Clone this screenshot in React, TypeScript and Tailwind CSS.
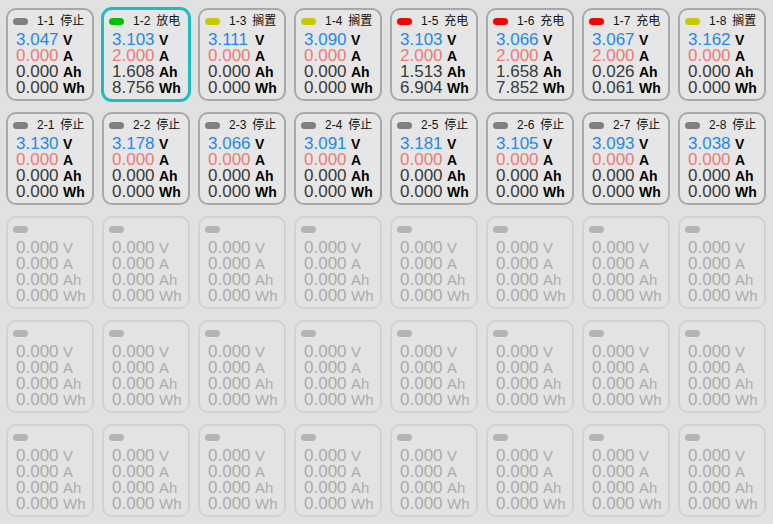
type Ch = {
  id: string;
  state?: string;
  led: string;
  v: string;
  a: string;
  ah: string;
  wh: string;
  selected?: boolean;
};

const row1: Ch[] = [
  { id: "1-1", state: "停止", led: "bg-[#808080]", v: "3.047", a: "0.000", ah: "0.000", wh: "0.000" },
  { id: "1-2", state: "放电", led: "bg-[#00c000]", v: "3.103", a: "2.000", ah: "1.608", wh: "8.756", selected: true },
  { id: "1-3", state: "搁置", led: "bg-[#c8c800]", v: "3.111", a: "0.000", ah: "0.000", wh: "0.000" },
  { id: "1-4", state: "搁置", led: "bg-[#c8c800]", v: "3.090", a: "0.000", ah: "0.000", wh: "0.000" },
  { id: "1-5", state: "充电", led: "bg-[#ff0000]", v: "3.103", a: "2.000", ah: "1.513", wh: "6.904" },
  { id: "1-6", state: "充电", led: "bg-[#ff0000]", v: "3.066", a: "2.000", ah: "1.658", wh: "7.852" },
  { id: "1-7", state: "充电", led: "bg-[#ff0000]", v: "3.067", a: "2.000", ah: "0.026", wh: "0.061" },
  { id: "1-8", state: "搁置", led: "bg-[#c8c800]", v: "3.162", a: "0.000", ah: "0.000", wh: "0.000" },
];

const row2Volts = ["3.130", "3.178", "3.066", "3.091", "3.181", "3.105", "3.093", "3.038"];
const row2: Ch[] = row2Volts.map((v, i) => ({
  id: `2-${i + 1}`,
  state: "停止",
  led: "bg-[#808080]",
  v,
  a: "0.000",
  ah: "0.000",
  wh: "0.000",
}));

const font = "font-['Liberation_Sans','Noto_Sans_CJK_SC',sans-serif]";

function ActiveCard({ c }: { c: Ch }) {
  return (
    <div
      className={
        c.selected
          ? "-m-px rounded-[11px] border-[3px] border-[#1cbcc4] bg-[#e6e6e6] pl-[5px] pr-[1px] pt-[4px]"
          : "rounded-[10px] border-2 border-[#a8a8a8] bg-[#e6e6e6] pl-[5px] pr-[1px] pt-[4px]"
      }
    >
      <div className="flex h-[14px] items-center whitespace-nowrap">
        <span className={`h-[7px] w-[15px] shrink-0 rounded-full ${c.led}`} />
        <span className="ml-[9px] text-[12px] leading-[14px] text-[#111]">{c.id}</span>
        <span className="ml-[6px] text-[12px] leading-[14px] text-[#111]">{c.state}</span>
      </div>
      <div className="mt-[4px] flex flex-col pl-[3px]">
        <Line val={c.v} unit="V" color="text-[#1e88f0]" />
        <Line val={c.a} unit="A" color="text-[#f07878]" />
        <Line val={c.ah} unit="Ah" color="text-[#3a3a3a]" />
        <Line val={c.wh} unit="Wh" color="text-[#3a3a3a]" />
      </div>
    </div>
  );
}

function Line({ val, unit, color }: { val: string; unit: string; color: string }) {
  return (
    <div className="flex h-[16px] items-center whitespace-nowrap">
      <span className={`w-[47px] shrink-0 text-[17px] leading-[16px] ${color}`}>{val}</span>
      <span className="text-[14px] font-bold leading-[16px] text-black">{unit}</span>
    </div>
  );
}

function IdleCard() {
  return (
    <div className="rounded-[10px] border-2 border-[#d2d2d2] bg-[#e3e3e3] pl-[5px] pr-[1px] pt-[4px]">
      <div className="flex h-[14px] items-center">
        <span className="h-[7px] w-[15px] rounded-full bg-[#b4b4b4]" />
      </div>
      <div className="mt-[4px] flex flex-col pl-[3px] text-[#ababab]">
        {["V", "A", "Ah", "Wh"].map((u) => (
          <div key={u} className="flex h-[16px] items-center whitespace-nowrap">
            <span className="w-[47px] shrink-0 text-[17px] leading-[16px]">0.000</span>
            <span className="text-[15px] leading-[16px]">{u}</span>
          </div>
        ))}
      </div>
    </div>
  );
}

export default function App() {
  return (
    <div className={`h-[524px] w-[773px] overflow-hidden bg-[#e1e1e1] ${font}`}>
      <div className="grid grid-cols-[repeat(8,88px)] auto-rows-[93px] gap-x-[8px] gap-y-[11px] pl-[6px] pt-[8px]">
        {row1.map((c) => (
          <ActiveCard key={c.id} c={c} />
        ))}
        {row2.map((c) => (
          <ActiveCard key={c.id} c={c} />
        ))}
        {Array.from({ length: 24 }).map((_, i) => (
          <IdleCard key={i} />
        ))}
      </div>
    </div>
  );
}
